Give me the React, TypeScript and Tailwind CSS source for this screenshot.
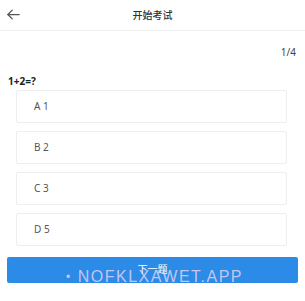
import React, { useState } from 'react';

const options = [
  { key: 'A', label: '1' },
  { key: 'B', label: '2' },
  { key: 'C', label: '3' },
  { key: 'D', label: '5' },
];

export default function App() {
  const [selected, setSelected] = useState<string | null>(null);

  return (
    <div
      className="relative w-[305px] h-[301px] bg-white overflow-hidden text-[#333]"
      style={{ fontFamily: '"Noto Sans", "Noto Sans CJK SC", sans-serif' }}
    >
      {/* header */}
      <div className="relative flex items-center justify-center h-[31px] border-b border-[#f2f2f2]">
        <button className="absolute left-[6px] top-[7px] text-[#555]">
          <svg width="15" height="15" viewBox="0 0 24 24" fill="none" stroke="currentColor" strokeWidth="2" strokeLinecap="round" strokeLinejoin="round">
            <path d="M21 12H3" />
            <path d="M10 5l-7 7 7 7" />
          </svg>
        </button>
        <span className="text-[10px] text-[#333] font-medium">开始考试</span>
      </div>

      <div className="flex justify-end pr-[9px] pt-[14px] text-[10px] text-[#444]">1/4</div>

      <div className="px-[8px] pt-[14px] text-[10px] font-bold text-[#222]">1+2=?</div>

      <div className="flex flex-col gap-[8px] pl-[16px] pr-[18px] pt-[1px]">
        {options.map((o) => (
          <div
            key={o.key}
            onClick={() => setSelected(o.key)}
            className={
              'h-[33px] flex items-center pl-[17px] rounded-[2px] border text-[10px] text-[#555] ' +
              (selected === o.key ? 'border-[#2b8ae6]' : 'border-[#eeeeee]')
            }
          >
            {o.key} {o.label}
          </div>
        ))}
      </div>

      <div className="px-[7px] pt-[11px]">
        <button className="w-full h-[26px] rounded-[2px] bg-[#2b8be6] text-white text-[10px] flex items-start justify-center pt-[5px]">
          下一题
        </button>
      </div>

      {/* watermark */}
      <div
        className="absolute left-[66px] top-[269px] flex items-center gap-[6px] text-[16px] leading-none text-[#ecd6f4]/80 tracking-[1.5px] pointer-events-none"
        style={{ fontFamily: '"Liberation Sans", sans-serif' }}
      >
        <span className="text-[12px]">•</span>
        <span>NOFKLXAWET.APP</span>
      </div>
    </div>
  );
}
